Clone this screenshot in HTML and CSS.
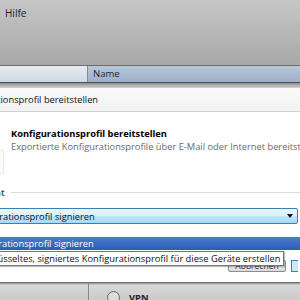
FILE: index.html
```html
<!DOCTYPE html>
<html>
<head>
<meta charset="utf-8">
<link rel="stylesheet" href="styles.css">
</head>
<body>
<div class="screen">
  <div class="menubar"><span class="menu-item">Hilfe</span></div>
  <div class="colheader">
    <div class="col col-first"></div>
    <div class="col col-name">Name</div>
  </div>
  <div class="dialog-shadow"></div>
  <div class="dialog">
    <div class="titlebar"><span class="title-text">Konfigurationsprofil bereitstellen</span></div>
    <div class="wizard-head">
      <div class="wizard-icon"></div>
      <div class="wizard-texts">
        <div class="wizard-title">Konfigurationsprofil bereitstellen</div>
        <div class="wizard-sub">Exportierte Konfigurationsprofile über E-Mail oder Internet bereitstellen</div>
      </div>
    </div>
    <div class="group">
      <span class="group-label">Format</span>
      <span class="group-line"></span>
    </div>
    <div class="combo">
      <span class="combo-text">Konfigurationsprofil signieren</span>
      <span class="combo-arrow"></span>
    </div>
    <div class="footer">
      <span class="btn">Abbrechen</span>
      <span class="btn-edge"></span>
    </div>
    <div class="popup">
      <div class="opt opt-selected"><span class="opt-text">Konfigurationsprofil signieren</span></div>
      <div class="opt opt-tip"><span class="opt-text">Verschlüsseltes, signiertes Konfigurationsprofil für diese Geräte erstellen</span></div>
    </div>
  </div>
  <div class="behind">
    <div class="behind-col"></div>
    <div class="behind-row">
      <span class="globe"></span><span class="behind-text">VPN</span>
    </div>
  </div>
</div>
</body>
</html>
```
FILE: styles.css
```css
html, body {
  margin: 0;
  padding: 0;
}
body {
  width: 300px;
  height: 300px;
  overflow: hidden;
  font-family: "Open Sans", "Noto Sans", sans-serif;
  font-size: 9.3px;
  color: #1a1a1a;
}
.screen {
  width: 300px;
  height: 300px;
  overflow: hidden;
  position: relative;
  background: #c4c4c4;
}
.menubar {
  height: 65px;
  border-bottom: 1px solid #6c6c6c;
  background: linear-gradient(#c6c6c6, #a8a8a8);
}
.menu-item {
  display: inline-block;
  margin: 6px 0 0 5px;
  font-size: 10px;
  color: #1c1c1c;
}
.colheader {
  display: flex;
  height: 16px;
  border-bottom: 1px solid #4a4f56;
}
.col-first {
  width: 87px;
  border-right: 1px solid #7f8a96;
  background: linear-gradient(#e6ecf2, #d0d8e0);
}
.col-name {
  flex: 1;
  padding-left: 5px;
  line-height: 16px;
  font-size: 9.5px;
  color: #1c2430;
  background: linear-gradient(#b8c8dc, #9bb0c8);
}
.dialog-shadow {
  height: 5px;
  background: linear-gradient(#8e8e8e, #d4d4d4);
}
.dialog {
  position: relative;
  margin-left: -62px;
  width: 362px;
  background: #fff;
  height: 194px;
  border-bottom: 1px solid #707070;
}
.titlebar {
  height: 23px;
  line-height: 23px;
  padding-left: 17px;
  background: linear-gradient(#fafafa, #f2f2f2);
  border-bottom: 1px solid #d2d2d2;
  color: #111;
  white-space: nowrap;
}
.wizard-head {
  display: flex;
  height: 73px;
}
.wizard-icon {
  flex-shrink: 0;
  width: 12px;
  height: 22px;
  margin: 38px 0 0 53px;
  border: 1px solid #ececec;
  border-left: 0;
  background: #fafafa;
}
.wizard-texts {
  padding: 15px 0 0 7px;
  white-space: nowrap;
}
.wizard-title {
  font-weight: bold;
  color: #000;
  line-height: 13px;
}
.wizard-sub {
  color: #6a6a6a;
  line-height: 14px;
}
.group {
  display: flex;
  align-items: center;
  height: 14px;
  margin-left: 34px;
}
.group-label {
  color: #1f4d1e;
  font-weight: 600;
}
.group-line {
  flex: 1;
  height: 1px;
  background: #d6dbe2;
  margin-left: 6px;
}
.combo {
  display: flex;
  align-items: center;
  height: 14px;
  margin: 9px 2px 0 23px;
  border: 1px solid #3c7fb1;
  border-radius: 2px;
  background: linear-gradient(#eaf6fd 0%, #d9f0fc 50%, #bee6fd 51%, #a7d9f5 100%);
  white-space: nowrap;
  overflow: hidden;
}
.combo-text {
  flex: 1;
  padding-left: 4px;
  color: #111;
}
.combo-arrow {
  width: 0;
  height: 0;
  margin-right: 4px;
  border-left: 3px solid transparent;
  border-right: 3px solid transparent;
  border-top: 4px solid #111;
}
.footer {
  display: flex;
  justify-content: flex-end;
  align-items: flex-start;
  margin-top: 36px;
  padding-right: 2px;
}
.btn {
  width: 56px;
  height: 10px;
  line-height: 10px;
  text-align: center;
  font-size: 8.5px;
  color: #333;
  border: 1px solid #8c8c8c;
  border-radius: 2px;
  background: linear-gradient(#f3f3f3, #dcdcdc);
}
.btn-edge {
  width: 6px;
  height: 10px;
  margin-left: 5px;
  border: 1px solid #3c7fb1;
  border-right: 0;
  background: #cfe8f8;
}
.popup {
  position: absolute;
  top: 137px;
  left: 23px;
  right: 0;
}
.opt {
  height: 13px;
  line-height: 13px;
  white-space: nowrap;
}
.opt-selected {
  margin-top: 12px;
  padding-left: 4px;
  background: linear-gradient(#4a7cd0, #2c5cb4);
  color: #fff;
}
.opt-tip {
  display: inline-block;
  padding: 0 3px 0 4px;
  margin-top: 1px;
  border: 1px solid #767676;
  background: #fff;
  color: #111;
  box-shadow: 1px 1px 1px rgba(0,0,0,0.25);
}
.behind {
  position: relative;
  height: 20px;
  background: linear-gradient(#8a8a8a 0, #d8d8d8 2px, #c8c8c8);
}
.behind-col {
  position: absolute;
  left: 88px;
  top: 0;
  bottom: 0;
  width: 1px;
  background: #888;
}
.behind-row {
  display: flex;
  align-items: center;
  padding: 8px 0 0 107px;
}
.globe {
  width: 11px;
  height: 11px;
  border-radius: 50%;
  border: 1px solid #666;
  background: #ddd;
}
.behind-text {
  margin-left: 9px;
  font-weight: bold;
  color: #222;
}
```
